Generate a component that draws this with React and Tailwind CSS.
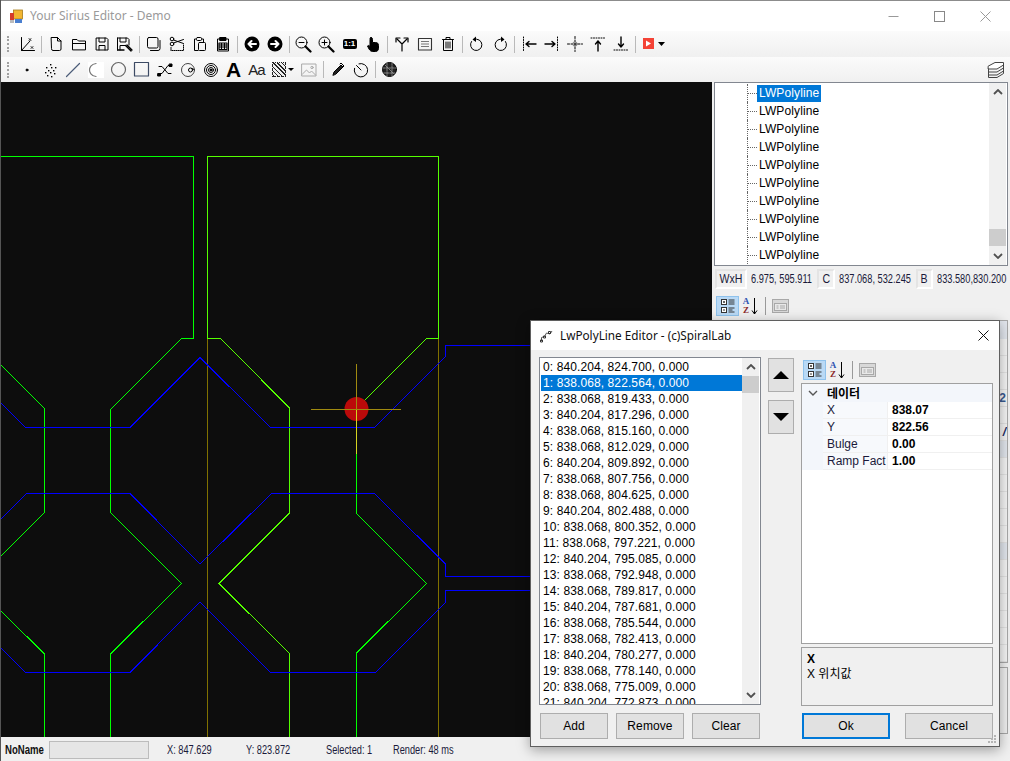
import React from "react";

const I = ({ children, w = 16, h = 16, sw = 1, c = "#000", f = "none" }) => (
  <svg width={w} height={h} viewBox={`0 0 ${w} ${h}`} fill={f} stroke={c} strokeWidth={sw} strokeLinecap="round" strokeLinejoin="round">
    {children}
  </svg>
);

const Sep = ({ h = "h-[17px]" }) => (
  <div className="w-[6px] flex justify-center shrink-0">
    <div className={`w-px ${h} bg-[#b9b9b9]`} />
  </div>
);

const Btn = ({ children, w = "w-[23px]" }) => (
  <div className={`${w} h-[22px] flex items-center justify-center shrink-0`}>{children}</div>
);

const Grip = () => (
  <div className="w-[3px] h-[16px] ml-[6px] mr-[5px] shrink-0 border-l-2 border-dotted border-[#a0a0a0]" />
);

const Narrow = ({ children, cls = "scale-x-[0.77]" }) => (
  <span className={`inline-block origin-left whitespace-nowrap ${cls}`}>{children}</span>
);

const Round = ({ d }) => (
  <I w={16} h={16} sw={2} c="#fff">
    <circle cx="8" cy="8" r="7.5" fill="#000" stroke="none" />
    {d === "l" ? <path d="M12 8H4.500M7.500 5L4.500 8l3 3" /> : <path d="M4 8h7.500M8.500 5l3 3-3 3" />}
  </I>
);

const Mag = ({ plus }) => (
  <I w={17} h={17}>
    <circle cx="6.500" cy="6.500" r="5.500" />
    <path d="M4 6.500h5" />
    {plus && <path d="M6.500 4v5" />}
    <path d="M10.500 10.500l5 5" strokeWidth="2.200" />
  </I>
);

const tb1 = [
  <I><path d="M2.500 1.500v13h13" /><path d="M2.500 14.500L11 5" /><path d="M10 2.500l2 2M12 2.500l-2 2M12 10.500l2 2M14 10.500l-2 2" strokeWidth=".8" /></I>,
  "|",
  <I><path d="M3.500 1.500h6l3.500 3.500v8a1.500 1.500 0 0 1-1.500 1.500h-6.500A1.500 1.500 0 0 1 3.500 13z" /><path d="M9.500 1.500V5H13" /></I>,
  <I><path d="M1.500 13.500V3.500h4.500l1.500 1.500h7v8.500z" /><path d="M1.500 7.500h13" /></I>,
  <I><path d="M2.500 2h10l1.500 1.500v10.500h-11.500z" /><path d="M5 2v4h6V2M5 14V9.500h6V14" /></I>,
  <I w={17}><path d="M1.500 2h10l1.500 1.500V9M8 14H1.500z" /><path d="M1.500 2v12M4 2v4h6V2M4 14V9.500h5" /><path d="M9.500 9.500l5.500 5.500M11 9l5 5" strokeWidth="1.300" /></I>,
  "|",
  <I><rect x="1.500" y="1.500" width="10.500" height="10.500" rx="1.500" /><path d="M14 4.500v8a2 2 0 0 1-2 2H4.500" /></I>,
  <I><circle cx="3" cy="3" r="1.800" /><circle cx="3" cy="8" r="1.800" /><path d="M4.500 4l10 3.500M4.500 7l10-3.500" /><path d="M2 11.500v3h12.500v-6" strokeDasharray="1 1" /></I>,
  <I><path d="M4 3H2.500v11.500H6M10 3h1.500v3" /><rect x="4.500" y="1.500" width="5" height="3" rx="1" /><rect x="6.500" y="6.500" width="7" height="8" rx="1" /></I>,
  <I><path d="M4.500 3h-2v12h11V3h-2" /><rect x="5" y="1.500" width="6" height="3" fill="#000" /><path d="M4 7h8v6.500H4zM4 9h8M4 11h8M6.500 7v6.500M9.500 7v6.500" strokeWidth="1.200" /></I>,
  "|",
  <Round d="l" />,
  <Round d="r" />,
  "|",
  <Mag />,
  <Mag plus />,
  <div className="w-[14px] h-[10px] bg-black rounded-[2px] text-white text-[8px] leading-[10px] font-bold text-center">1:1</div>,
  <I><path d="M6 1.500c1.300 0 1.500 1 1.500 2v3h3c2 0 3 1 3 3v3c0 1.500-1 3-3 3h-3c-1.500 0-2.500-1-3.500-2.500L2.500 10c1-1 1.500-.5 2.500.5V3.500c0-1 0-2 1-2z" fill="#000" /></I>,
  "|",
  <I sw={1.200}><path d="M8 15V8M8 8L3 3M8 8l5-5" /><path d="M2 6V2h4M10 2h4v4" /></I>,
  <I><rect x="1.500" y="2.500" width="13" height="11.500" strokeWidth="1.100" stroke="#333" /><path d="M4 5.500h8M4 8h8M4 10.500h8" stroke="#777" strokeLinecap="butt" /></I>,
  <I><path d="M2.500 3.500h11M6 3.500V1.500h4v2M3.500 3.500v11h9v-11M6 6v6M8 6v6M10 6v6" /></I>,
  "|",
  <I><path d="M5 3.500a5.700 5.700 0 1 1-2.500 2" /><path d="M7 .5L3.500 3.500 7 6" fill="#000" stroke="none" /></I>,
  <I><path d="M11 3.500a5.700 5.700 0 1 0 2.500 2" /><path d="M9 .5l3.500 3L9 6" fill="#000" stroke="none" /></I>,
  "|",
  <I sw={1.400}><path d="M2.500 1v14" strokeDasharray="1 1.500" strokeWidth="1" /><path d="M15 8H5M8 5.500L5 8l3 2.500" /></I>,
  <I sw={1.400}><path d="M13.500 1v14" strokeDasharray="1 1.500" strokeWidth="1" /><path d="M1 8h10M8 5.500L11 8l-3 2.500" /></I>,
  <I><path d="M8 .5v15M.5 8h15" strokeDasharray="2 1.500" /><circle cx="8" cy="8" r="2.200" stroke="#777" /></I>,
  <I sw={1.400}><path d="M1 2h14" strokeDasharray="1 1.500" strokeWidth="1" /><path d="M8 15V5M5.500 8L8 5l2.500 3" /></I>,
  <I sw={1.400}><path d="M1 14h14" strokeDasharray="1 1.500" strokeWidth="1" /><path d="M8 1v10M5.500 8L8 11l2.500-3" /></I>,
  "|",
  <I c="none"><rect x="1" y="2" width="11" height="11" fill="#f44336" /><path d="M4 4.500v6L9 7.500z" fill="#fff" /></I>,
];

const tb2 = [
  <I><circle cx="8" cy="8" r="1" fill="#000" /></I>,
  <I c="none" f="#000">{[[8,2],[4,5],[9,5],[13,5],[6,8],[11,8],[3,10],[8,10],[12,11],[5,13],[9,14]].map(([x, y], i) => <rect key={i} x={x} y={y} width="1.400" height="1.400" />)}</I>,
  <I c="#4b5c78"><path d="M1.500 14.500L14.500 1.500" strokeWidth="1.200" /></I>,
  <div className="w-[16px] h-[16px] bg-white flex items-center"><I c="#777"><path d="M8 1.500C3 2 1.500 6 1.500 8s1.500 6 6.500 6.500" strokeWidth="1.200" /></I></div>,
  <I c="#666" w={17} h={17}><circle cx="8.500" cy="8.500" r="7" strokeWidth="1.200" /></I>,
  <I c="#3c4a64" w={17} h={17}><rect x="1.500" y="1.500" width="14" height="13.500" strokeWidth="1.200" /></I>,
  <I><path d="M2 4.500h3l6 7h3M14 3.500h-3l-6 8H2" /><rect x="1" y="11.500" width="2.500" height="2.500" fill="#000" /><rect x="12.500" y="2" width="2.500" height="2.500" fill="#000" /></I>,
  <I><circle cx="8" cy="8" r="6.500" stroke="#444" /><circle cx="10.500" cy="8" r="2" /><path d="M12 6.500l2 1" /></I>,
  <I><circle cx="8" cy="8" r="6.500" /><circle cx="8" cy="8" r="4.500" /><circle cx="8" cy="8" r="2.500" /><circle cx="8" cy="8" r="1" fill="#000" /></I>,
  <span className="text-[21px] leading-none font-bold text-black">A</span>,
  <span className="text-[15px] leading-none tracking-[-1px] text-[#222]">Aa</span>,
];

const Tree = () => (
  <div className="h-[184px] w-[294px] ml-[2px] border border-[#828790] bg-white flex relative overflow-hidden shrink-0">
    <div className="flex-1 pt-[1px]">
      {Array.from({ length: 10 }).map((_, i) => (
        <div key={i} className="h-[18px] flex items-center pl-[32px]">
          <div className="w-px h-[18px] border-l border-dotted border-[#666]" />
          <div className="w-[9px] border-t border-dotted border-[#666]" />
          <span className={`h-[17px] leading-[17px] px-[2px] text-[12px] tracking-[0.12px] ${i === 0 ? "bg-[#0078d7] text-white" : "text-black"}`}>LWPolyline</span>
        </div>
      ))}
    </div>
    <Scroll top={146} h={17} />
  </div>
);

const Chev = ({ up }) => (
  <svg width="10" height="6" viewBox="0 0 10 6" fill="none" stroke="#505050" strokeWidth="1.800">
    <path d={up ? "M1 5l4-4 4 4" : "M1 1l4 4 4-4"} />
  </svg>
);

const Scroll = ({ top, h }) => (
  <div className="w-[17px] bg-[#f0f0f0] flex flex-col items-center justify-between py-[6px] relative shrink-0 mr-px">
    <Chev up />
    <div className="absolute left-0 w-full bg-[#cdcdcd]" style={{ top, height: h }} />
    <Chev />
  </div>
);

const Pair = ({ label, w, val, vw }) => (
  <>
    <div className={`${w} h-[20px] border-2 border-[#e4e4e4] border-r-white border-b-white flex items-center justify-center text-[12px] text-[#1a1a3a] shrink-0`}>
      <span className="inline-block whitespace-nowrap scale-x-[0.88]">{label}</span>
    </div>
    <div className={`${vw} h-[20px] text-[12px] leading-[20px] text-[#1a1a3a] pl-[4px] overflow-visible shrink-0`}>
      <Narrow>{val}</Narrow>
    </div>
  </>
);

const PropBar = () => (
  <div className="flex items-center h-[21px]">
    <div className="w-[23px] h-[20px] bg-[#b9d9f5] border border-[#8fc2ec] flex items-center justify-center">
      <svg width="16" height="16" viewBox="0 0 16 16" fill="none" stroke="#333" strokeWidth="1">
        <rect x="1.500" y="1.500" width="5" height="5" fill="#fff" />
        <rect x="1.500" y="9.500" width="5" height="5" fill="#fff" />
        <path d="M3 4h2M4 3v2M3 12h2M8.500 2h6M8.500 4h6M8.500 6h6M8.500 10h6M8.500 12h4M8.500 14h6" />
      </svg>
    </div>
    <div className="w-[18px] h-[20px] ml-[2px] flex items-center">
      <div className="flex flex-col items-center w-[10px] text-[9px] leading-[9px] font-bold font-['Liberation_Serif',serif]">
        <span className="text-[#2f52b0]">A</span>
        <span className="text-[#8c2a2a]">Z</span>
      </div>
      <svg width="7" height="18" viewBox="0 0 7 18" fill="none" stroke="#000" strokeWidth="1">
        <path d="M3.500 1v16M1 13.500L3.500 17 6 13.500" />
      </svg>
    </div>
    <div className="w-px h-[18px] bg-[#999] ml-[6px]" />
    <div className="ml-[6px]">
      <svg width="17" height="16" viewBox="0 0 17 16" stroke="#a8a8a8" strokeWidth="1" fill="#d8d8d8">
        <rect x=".5" y="1.500" width="16" height="13" />
        <rect x="2.500" y="5.500" width="12" height="7" fill="#e8e8e8" />
        <path d="M4.500 8h2M4.500 10h2M8 8h5M8 10h5" />
      </svg>
    </div>
  </div>
);

const pts = [
  "840.204, 824.700", "838.068, 822.564", "838.068, 819.433", "840.204, 817.296", "838.068, 815.160",
  "838.068, 812.029", "840.204, 809.892", "838.068, 807.756", "838.068, 804.625", "840.204, 802.488",
  "838.068, 800.352", "838.068, 797.221", "840.204, 795.085", "838.068, 792.948", "838.068, 789.817",
  "840.204, 787.681", "838.068, 785.544", "838.068, 782.413", "840.204, 780.277", "838.068, 778.140",
  "838.068, 775.009", "840.204, 772.873",
];

const WinBtn = ({ children, w = "w-[68px]" }) => (
  <div className={`${w} h-[26px] bg-[#e1e1e1] border border-[#adadad] flex items-center justify-center text-[12px] tracking-[0.1px] text-black`}>{children}</div>
);

const Row = ({ k, v }) => (
  <div className="h-[17px] flex overflow-hidden">
    <div className="w-[21px] bg-[#f3f6fb] shrink-0" />
    <div className="w-[65px] pl-[4px] bg-[#f7f9fc] border-b border-r border-[#f0f0f0] text-[12px] leading-[17px] text-[#1a1a3a] overflow-hidden whitespace-nowrap shrink-0">{k}</div>
    <div className="flex-1 pl-[4px] border-b border-[#f0f0f0] text-[12px] leading-[17px] font-bold text-black">{v}</div>
  </div>
);

const Dialog = () => (
  <div className="absolute left-[529px] top-[320px] w-[470px] h-[427px] border border-[#5f5f5f] bg-[#f0f0f0] shadow-[0_3px_12px_rgba(0,0,0,0.35)] flex flex-col">
    <div className="h-[29px] bg-white flex items-center shrink-0">
      <div className="ml-[9px] w-[14px]">
        <svg width="14" height="14" viewBox="0 0 14 14" fill="none" stroke="#555" strokeWidth="1">
          <path d="M1.500 12V8.500l3-1 2-3.500 3.500 1 2-3" />
          <path d="M.5 11h2v2h-2zM3.500 7h2v2h-2zM8.500 2.500h2v2h-2z" stroke="#333" />
        </svg>
      </div>
      <span className="ml-[6px] text-[11.750px] text-[#111] font-['Noto_Sans',sans-serif]">LwPolyLine Editor - (c)SpiralLab</span>
      <div className="ml-auto mr-[10px]">
        <svg width="11" height="11" viewBox="0 0 11 11" stroke="#111" strokeWidth="1"><path d="M.5.5l10 10M10.500.5l-10 10" /></svg>
      </div>
    </div>
    <div className="flex pl-[8px] pt-[7px]">
      <div className="w-[222px] shrink-0">
        <div className="h-[348px] border border-[#828790] bg-white flex overflow-hidden">
          <div className="flex-1 pt-px pl-px overflow-hidden">
            {pts.map((p, i) => (
              <div key={i} className={`h-[16px] leading-[16px] pl-[2px] text-[12px] tracking-[0.1px] whitespace-nowrap ${i === 1 ? "bg-[#0078d7] text-white" : "text-black"}`}>
                {i}: {p}, 0.000
              </div>
            ))}
          </div>
          <Scroll top={18} h={17} />
        </div>
        <div className="flex gap-[8px] mt-[8px] pl-px">
          <WinBtn>Add</WinBtn>
          <WinBtn>Remove</WinBtn>
          <WinBtn>Clear</WinBtn>
        </div>
      </div>
      <div className="w-[26px] ml-[7px] mt-px shrink-0 flex flex-col gap-[8px]">
        <div className="h-[34px] bg-[#e1e1e1] border border-[#adadad] flex items-center justify-center">
          <svg width="16" height="8" viewBox="0 0 16 8"><path d="M8 0l8 8H0z" fill="#000" /></svg>
        </div>
        <div className="h-[34px] bg-[#e1e1e1] border border-[#adadad] flex items-center justify-center">
          <svg width="16" height="8" viewBox="0 0 16 8"><path d="M0 0h16L8 8z" fill="#000" /></svg>
        </div>
      </div>
      <div className="w-[192px] ml-[7px] shrink-0">
        <div className="pl-[2px] mt-[2px] h-[24px]"><PropBar /></div>
        <div className="h-[261px] border border-[#a0a0a0] bg-white">
          <div className="h-[18px] bg-[#f3f6fb] flex items-center">
            <div className="w-[25px] pl-[6px]">
              <svg width="10" height="6" viewBox="0 0 10 6" fill="none" stroke="#555" strokeWidth="1.400"><path d="M1 1l4 4 4-4" /></svg>
            </div>
            <span className="text-[12px] font-bold text-black pt-[2px]">데이터</span>
          </div>
          <Row k="X" v="838.07" />
          <Row k="Y" v="822.56" />
          <Row k="Bulge" v="0.00" />
          <Row k="Ramp Fact" v="1.00" />
        </div>
        <div className="h-[59px] mt-[3px] border border-[#a0a0a0] px-[5px] pt-[4px] text-[12px] leading-[15px] text-black">
          <div className="font-bold">X</div>
          <div>X 위치값</div>
        </div>
        <div className="flex justify-between mt-[7px] pl-px">
          <div className="w-[88px] h-[26px] bg-[#e1e1e1] border-2 border-[#0078d7] flex items-center justify-center text-[12px] text-black">Ok</div>
          <WinBtn w="w-[88px]">Cancel</WinBtn>
        </div>
      </div>
    </div>
    <svg className="absolute right-[2px] bottom-[2px]" width="9" height="9" viewBox="0 0 9 9" fill="#b5b5b5">
      <rect x="6" y="0" width="2" height="2" /><rect x="3" y="3" width="2" height="2" /><rect x="6" y="3" width="2" height="2" />
      <rect x="0" y="6" width="2" height="2" /><rect x="3" y="6" width="2" height="2" /><rect x="6" y="6" width="2" height="2" />
    </svg>
  </div>
);

const Canvas = () => {
  const G = "#00ff00";
  const L = "#55ff00";
  const B = "#0000ff";
  const O = "#807000";
  return (
    <svg className="block" width="711" height="655" viewBox="1 82 711 655" fill="none" shapeRendering="crispEdges" strokeWidth="1">
      <path stroke={O} d="M207.500 338V737M438.500 338V737" />
      <path stroke={G} d="M1 365L44.500 408.500V512.500L1 556M1 611L44.500 654V737" />
      <path stroke={G} d="M1 156.500H193.500V338.500H181.500L110.500 409.500V512.500L181.500 583.500L110.500 654V737" />
      <path stroke={L} d="M289.500 737V653.500L219 583.500L289.500 513V408L220.500 338.500H207.500V156.500H438.500V338.500H426.500L356.500 408.500" />
      <path stroke={G} d="M356.500 454V513.500L426.500 583.500L356.500 653V737" />
      <path stroke={B} d="M1 403L25.500 427.500H130L200 357.500L270.500 427.500H374.500L445.500 356.500V345.500H712" />
      <path stroke={B} d="M1 519L26.500 493.500H130L200 564L271.500 493.500H374.500L445.500 564V576.500H712" />
      <path stroke={B} d="M712 590.500H445.500V602.500L375.500 672.500H270.500L200 602L130 672.500H25.500L1 648" />
      <circle cx="356.500" cy="409" r="12" fill="#bb0a0a" shapeRendering="auto" stroke="none" />
      <path stroke="#a08a10" d="M356.500 364V409.500M311 409.500H401" />
      <path stroke="#d4d420" d="M356.500 409.500V454" />
    </svg>
  );
};

export default function App() {
  return (
    <div className="relative w-[1010px] h-[761px] overflow-hidden bg-[#f0f0f0] flex flex-col border-l border-[#555] font-['Liberation_Sans','Noto_Sans_CJK_KR',sans-serif]">
      <div className="h-px bg-[#8c8c8c] shrink-0" />
      <div className="h-[30px] bg-white flex items-center shrink-0">
        <div className="ml-[8px] w-[15px]">
          <svg width="15" height="15" viewBox="0 0 15 15" stroke="none">
            <rect x="4.500" y="1" width="9" height="9" fill="#f2b632" stroke="#a67c1a" strokeWidth=".8" />
            <rect x="1" y="4" width="4" height="7" fill="#d43c2c" />
            <rect x="6" y="10" width="7" height="4" fill="#4a7fd0" />
            <rect x="1" y="11" width="4" height="3" fill="#bbb" />
          </svg>
        </div>
        <span className="ml-[6px] text-[12px] text-[#9a9a9a] font-['Noto_Sans',sans-serif]">Your Sirius Editor - Demo</span>
        <div className="ml-auto flex items-center">
          <div className="w-[46px] flex justify-center"><svg width="11" height="11" viewBox="0 0 11 11" stroke="#999"><path d="M.5 5.500h10" /></svg></div>
          <div className="w-[46px] flex justify-center"><svg width="11" height="11" viewBox="0 0 11 11" fill="none" stroke="#888"><rect x=".5" y=".5" width="10" height="10" /></svg></div>
          <div className="w-[46px] flex justify-center mr-[2px]"><svg width="11" height="11" viewBox="0 0 11 11" stroke="#999"><path d="M.5.5l10 10M10.500.5l-10 10" /></svg></div>
        </div>
      </div>
      <div className="h-[26px] bg-linear-to-b from-[#fbfbfb] to-[#f0f0f0] flex items-center shrink-0">
        <Grip />
        {tb1.map((n, i) => n === "|" ? <Sep key={i} /> : <Btn key={i}>{n}</Btn>)}
        <svg className="-ml-[3px]" width="7" height="4" viewBox="0 0 7 4"><path d="M0 0h7L3.500 4z" fill="#000" /></svg>
      </div>
      <div className="h-[25px] bg-linear-to-b from-[#fbfbfb] to-[#f0f0f0] flex items-center shrink-0">
        <Grip />
        {tb2.map((n, i) => <Btn key={i}>{n}</Btn>)}
        <div className="flex items-center w-[25px] ml-[4px] shrink-0 gap-[2px]">
          <div className="w-[14px] h-[15px] border border-dotted border-[#222] bg-[repeating-linear-gradient(45deg,#222_0,#222_1px,#eee_1px,#eee_3px)]" />
          <svg width="6" height="3" viewBox="0 0 6 3"><path d="M0 0h6L3 3z" fill="#000" /></svg>
        </div>
        <Btn>
          <I c="#aaa"><rect x="1" y="2" width="14" height="12" /><path d="M1.500 12l4-4 3 3 2-2 4 4" /><circle cx="11" cy="5.500" r="1.200" /></I>
        </Btn>
        <Sep />
        <Btn>
          <I><path d="M3 13l1-3 7-7 2 2-7 7z" fill="#222" /><path d="M10 2l1-1 3 3-1 1" /></I>
        </Btn>
        <Btn>
          <I><path d="M6 1.800a6.700 6.700 0 1 1-4.500 4.500" /><path d="M3.500 3.500L8 8" /></I>
        </Btn>
        <Sep />
        <Btn>
          <I w={15} h={15}><circle cx="7.500" cy="7.500" r="7" fill="#222" /><path d="M1 6h13M2 11h11M5 1v13M10 1v13M3 3l9 9" stroke="#999" strokeDasharray="2 1" strokeWidth=".8" /></I>
        </Btn>
        <div className="ml-auto mr-[5px]">
          <I w={18} h={18} c="#444"><path d="M1.500 5L8 1.500h8.500V4L10 8H1.500z" fill="#fff" /><path d="M1.500 8v3h8.500l6.500-4V4M1.500 11v3h8.500l6.500-4V7M1.500 14v2.500H10l6.500-4V10" /></I>
        </div>
      </div>
      <div className="flex flex-1 min-h-0">
        <div className="w-[711px] h-[655px] bg-[#0d0d0d] shrink-0 overflow-hidden"><Canvas /></div>
        <div className="w-[298px] flex flex-col shrink-0">
          <Tree />
          <div className="flex items-center h-[20px] mt-[3px] pl-[3px]">
            <Pair label="WxH" w="w-[32px]" val="6.975, 595.911" vw="w-[70px]" />
            <Pair label="C" w="w-[18px]" val="837.068, 532.245" vw="w-[81px]" />
            <Pair label="B" w="w-[17px]" val="833.580,830.200" vw="w-[76px]" />
          </div>
          <div className="pl-[4px] mt-[6px] h-[24px]"><PropBar /></div>
          <div className="ml-[2px] w-[294px] h-[343px] mt-[1px] border border-[#a8a8a8] bg-white overflow-hidden">
            <div className="h-[18px] bg-[#e3e7ee]" />
            {Array.from({ length: 19 }).map((_, i) => (
              <div key={i} className={`h-[17px] border-b border-[#e4e4e4] text-right pr-px text-[12px] leading-[17px] font-bold ${i === 6 || i === 12 ? "bg-[#e3e7ee]" : "bg-[#f5f5f5]"} ${i === 3 ? "text-[#3a5a90]" : "text-[#1a2a60] italic"}`}>
                {i === 3 ? ",2" : i === 5 ? "/" : ""}
              </div>
            ))}
          </div>
          <div className="ml-[2px] w-[294px] h-[67px] mt-[4px] border border-[#a8a8a8]" />
        </div>
      </div>
      <div className="h-[23px] bg-[#f0f0f0] flex items-center relative z-0 shrink-0 text-[12px] text-[#1a1a3a]">
        <span className="ml-[4px] w-[44px] font-bold text-[#111]"><Narrow cls="scale-x-[0.8]">NoName</Narrow></span>
        <div className="w-[100px] h-[18px] bg-[#e6e6e6] border border-[#bcbcbc]" />
        <span className="ml-[18px] w-[79px]"><Narrow>X: 847.629</Narrow></span>
        <span className="w-[80px]"><Narrow>Y: 823.872</Narrow></span>
        <span className="w-[67px]"><Narrow>Selected: 1</Narrow></span>
        <span><Narrow>Render: 48 ms</Narrow></span>
      </div>
      <Dialog />
    </div>
  );
}
